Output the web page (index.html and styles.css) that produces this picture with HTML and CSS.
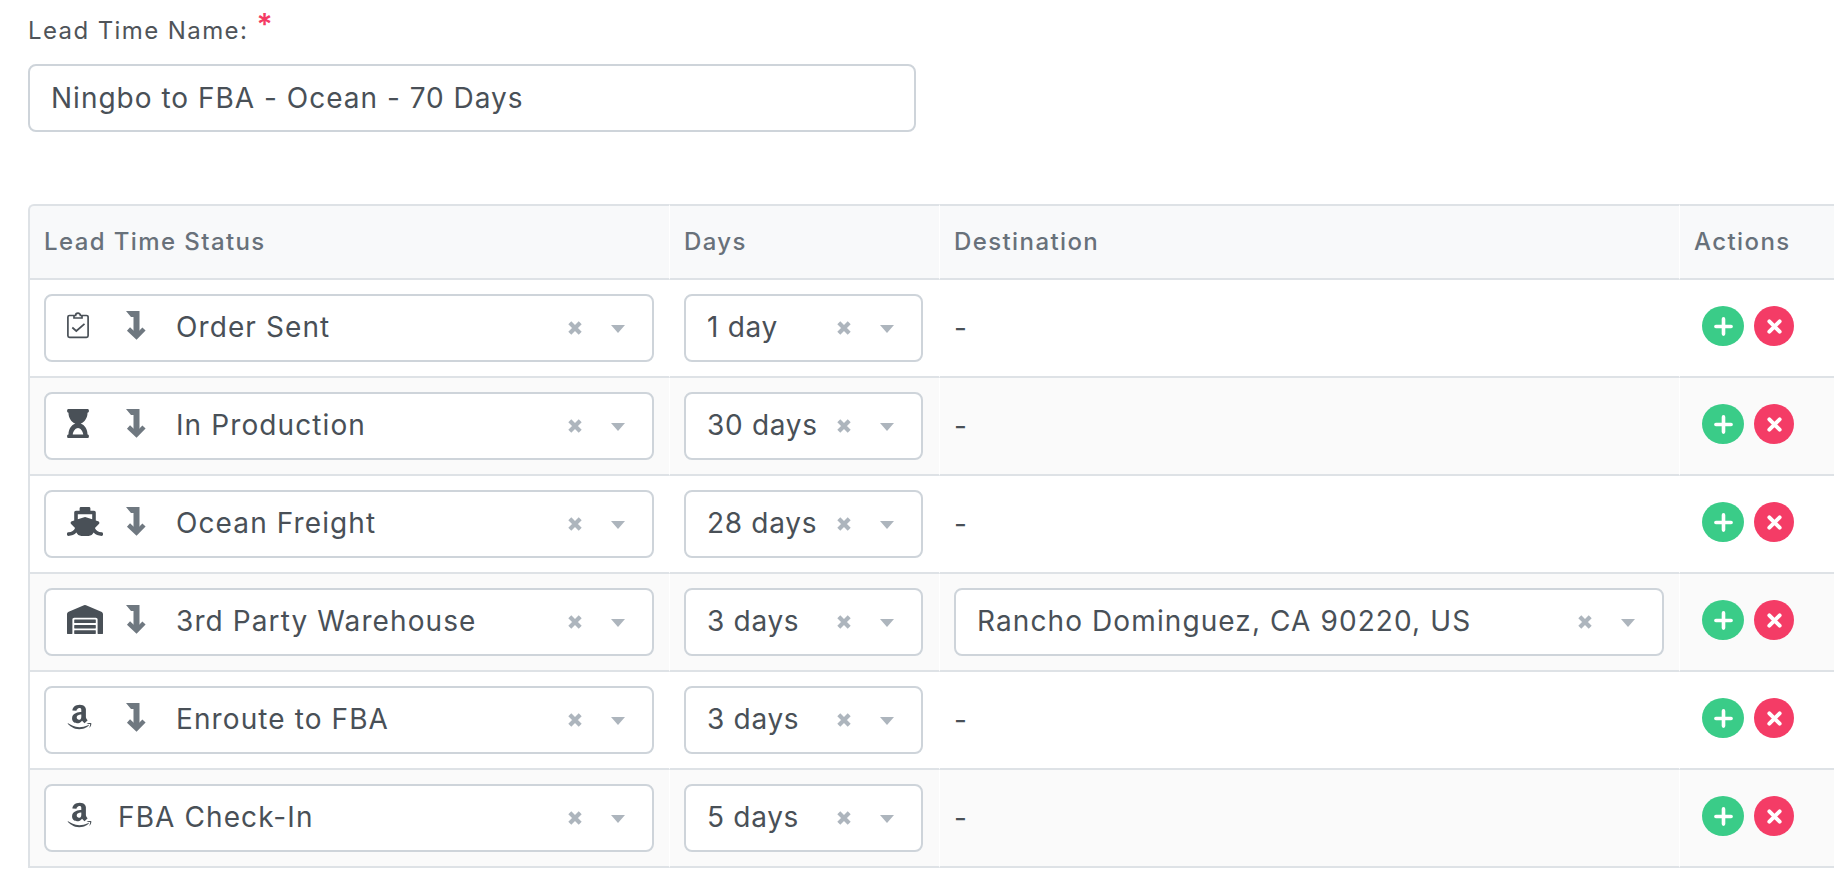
FILE: index.html
```html
<!DOCTYPE html>
<html lang="en">
<head>
<meta charset="utf-8">
<title>Lead Time</title>
<link rel="stylesheet" href="styles.css">
</head>
<body>
<svg class="defs" aria-hidden="true">
  <symbol id="i-arrow" viewBox="0 0 20 29"><path d="M0 0h13.500v24h-6V6H5z"/><path fill="none" stroke="currentColor" stroke-width="4.500" d="M2.500 18l8 7.500 7.500-7.500"/></symbol>
  <symbol id="i-clip" viewBox="0 0 22 28"><path fill="none" stroke="currentColor" stroke-width="1.7" d="M7 4.500H2.500a1.600 1.600 0 0 0-1.600 1.600v18.600a1.600 1.600 0 0 0 1.600 1.600h17a1.600 1.600 0 0 0 1.600-1.600V6.100a1.600 1.600 0 0 0-1.600-1.600H15M7 4.500V7h8V4.500h-1.600a2.400 2.400 0 0 0-4.800 0z"/><path fill="none" stroke="currentColor" stroke-width="1.700" d="M5.300 16.500l4 3.500 8.200-7.200"/></symbol>
  <symbol id="i-hour" viewBox="0 0 384 512"><path fill-rule="evenodd" d="M360 0H24C10.745 0 0 10.745 0 24v16c0 13.255 10.745 24 24 24 0 90.965 51.016 167.734 120.842 192C75.016 280.266 24 357.035 24 448c-13.255 0-24 10.745-24 24v16c0 13.255 10.745 24 24 24h336c13.255 0 24-10.745 24-24v-16c0-13.255-10.745-24-24-24 0-90.965-51.016-167.734-120.842-192C308.984 231.734 360 154.965 360 64c13.255 0 24-10.745 24-24V24c0-13.255-10.745-24-24-24zm-75.078 448H99.080c10-60 52.096-112 92.920-112 40.821 0 82.862 52 92.922 112z"/></symbol>
  <symbol id="i-ship" viewBox="0 0 640 512"><path d="M496.616 372.639l70.012-70.012c16.899-16.9 9.942-45.771-12.836-53.092L512 236.102V96c0-17.673-14.327-32-32-32h-64V24c0-13.255-10.745-24-24-24H248c-13.255 0-24 10.745-24 24v40h-64c-17.673 0-32 14.327-32 32v140.102l-41.792 13.433c-22.753 7.313-29.754 36.173-12.836 53.092l70.012 70.012C125.828 416.287 85.587 448 24 448c-13.255 0-24 10.745-24 24v16c0 13.255 10.745 24 24 24 61.023 0 107.499-20.61 143.258-59.396C181.677 487.432 216.021 512 256 512h128c39.979 0 74.323-24.568 88.742-59.396C508.495 491.384 554.968 512 616 512c13.255 0 24-10.745 24-24v-16c0-13.255-10.745-24-24-24-60.817 0-101.542-31.001-119.384-75.361zM192 128h256v87.500l-112.212-36.066a47.998 47.998 0 0 0-29.376 0L192 215.500V128z"/></symbol>
  <symbol id="i-ware" viewBox="0 0 640 512"><path d="M504 352H136.400c-4.400 0-8 3.600-8 8l-.1 48c0 4.400 3.600 8 8 8H504c4.400 0 8-3.600 8-8v-48c0-4.400-3.600-8-8-8zm0 96H136.100c-4.400 0-8 3.600-8 8l-.1 48c0 4.400 3.600 8 8 8h368c4.400 0 8-3.600 8-8v-48c0-4.400-3.600-8-8-8zm0-192H136.600c-4.400 0-8 3.600-8 8l-.1 48c0 4.400 3.600 8 8 8H504c4.400 0 8-3.600 8-8v-48c0-4.400-3.600-8-8-8zm106.500-139L338.400 3.700a48.150 48.150 0 0 0-36.900 0L29.500 117C11.700 124.500 0 141.900 0 161.300V504c0 4.400 3.600 8 8 8h80c4.400 0 8-3.600 8-8V256c0-17.600 14.600-32 32.600-32h382.800c18 0 32.600 14.400 32.600 32v248c0 4.400 3.600 8 8 8h80c4.400 0 8-3.600 8-8V161.300c0-19.400-11.700-36.800-29.500-44.300z"/></symbol>
  <symbol id="i-amzn" viewBox="0 0 448 512"><path d="M257.200 162.700c-48.700 1.800-169.500 15.500-169.500 117.500 0 109.500 138.300 114 183.500 43.200 6.500 10.200 35.400 37.500 45.300 46.800l56.800-56S341 288.900 341 261.400V114.300C341 89 316.500 32 228.700 32 140.700 32 94 87 94 136.300l73.500 6.800c16.300-49.500 54.200-49.500 54.200-49.500 40.700-.1 35.500 29.800 35.500 69.100zm0 86.800c0 80-84.200 68-84.200 17.200 0-47.200 50.500-56.700 84.200-57.800v40.600zm136 163.500c-7.700 10-70 67-174.500 67S34.200 408.500 9.700 379c-6.800-7.700 1-11.300 5.500-8.300C88.500 415.200 203 488.500 387.700 401c7.500-3.700 13.300 2 5.500 12zm39.800 2.200c-6.500 15.800-16 26.800-21.200 31-5.500 4.500-9.500 2.700-6.500-3.800s19.300-46.500 12.700-55c-6.500-8.300-37-4.300-48-3.200-10.800 1-13 2-14-.3-2.300-5.700 21.700-15.500 37.500-17.500 15.700-1.800 41-.8 46 5.700 3.700 5.100 0 27.100-6.500 43.100z"/></symbol>
  <symbol id="i-clear" viewBox="0 0 14 14"><path fill="none" stroke="currentColor" stroke-width="4.200" d="M1.800 1.800l10.400 10.400M12.200 1.800L1.800 12.200"/></symbol>
  <symbol id="i-caret" viewBox="0 0 14 8"><path d="M0 0h14L7 8z"/></symbol>
  <symbol id="i-plus" viewBox="0 0 20 20"><path fill="none" stroke="currentColor" stroke-width="3.800" stroke-linecap="round" d="M10 2v16M2 10h16"/></symbol>
  <symbol id="i-x" viewBox="0 0 16 16"><path fill="none" stroke="currentColor" stroke-width="4.200" stroke-linecap="round" d="M2.500 2.500l11 11M13.500 2.500l-11 11"/></symbol>
</svg>

<main class="page">
  <div class="field">
    <label class="field-label" for="name">Lead Time Name: <span class="req">*</span></label>
    <input class="text-input" id="name" type="text" value="Ningbo to FBA - Ocean - 70 Days">
  </div>

  <table class="grid">
    <colgroup><col class="c-status"><col class="c-days"><col class="c-dest"><col class="c-act"></colgroup>
    <thead>
      <tr><th>Lead Time Status</th><th>Days</th><th>Destination</th><th>Actions</th></tr>
    </thead>
    <tbody>
      <tr>
        <td><div class="sel"><div class="val"><svg class="ico ico-clip"><use href="#i-clip"/></svg><svg class="arrow"><use href="#i-arrow"/></svg><span>Order Sent</span></div><svg class="clr"><use href="#i-clear"/></svg><svg class="car"><use href="#i-caret"/></svg></div></td>
        <td><div class="sel"><div class="val"><span>1 day</span></div><svg class="clr"><use href="#i-clear"/></svg><svg class="car"><use href="#i-caret"/></svg></div></td>
        <td class="dash">-</td>
        <td><div class="acts"><button class="btn add" type="button"><svg><use href="#i-plus"/></svg></button><button class="btn del" type="button"><svg><use href="#i-x"/></svg></button></div></td>
      </tr>
      <tr>
        <td><div class="sel"><div class="val"><svg class="ico ico-hour"><use href="#i-hour"/></svg><svg class="arrow"><use href="#i-arrow"/></svg><span>In Production</span></div><svg class="clr"><use href="#i-clear"/></svg><svg class="car"><use href="#i-caret"/></svg></div></td>
        <td><div class="sel"><div class="val"><span>30 days</span></div><svg class="clr"><use href="#i-clear"/></svg><svg class="car"><use href="#i-caret"/></svg></div></td>
        <td class="dash">-</td>
        <td><div class="acts"><button class="btn add" type="button"><svg><use href="#i-plus"/></svg></button><button class="btn del" type="button"><svg><use href="#i-x"/></svg></button></div></td>
      </tr>
      <tr>
        <td><div class="sel"><div class="val"><svg class="ico ico-wide"><use href="#i-ship"/></svg><svg class="arrow"><use href="#i-arrow"/></svg><span>Ocean Freight</span></div><svg class="clr"><use href="#i-clear"/></svg><svg class="car"><use href="#i-caret"/></svg></div></td>
        <td><div class="sel"><div class="val"><span>28 days</span></div><svg class="clr"><use href="#i-clear"/></svg><svg class="car"><use href="#i-caret"/></svg></div></td>
        <td class="dash">-</td>
        <td><div class="acts"><button class="btn add" type="button"><svg><use href="#i-plus"/></svg></button><button class="btn del" type="button"><svg><use href="#i-x"/></svg></button></div></td>
      </tr>
      <tr>
        <td><div class="sel"><div class="val"><svg class="ico ico-wide"><use href="#i-ware"/></svg><svg class="arrow"><use href="#i-arrow"/></svg><span>3rd Party Warehouse</span></div><svg class="clr"><use href="#i-clear"/></svg><svg class="car"><use href="#i-caret"/></svg></div></td>
        <td><div class="sel"><div class="val"><span>3 days</span></div><svg class="clr"><use href="#i-clear"/></svg><svg class="car"><use href="#i-caret"/></svg></div></td>
        <td><div class="sel"><div class="val"><span>Rancho Dominguez, CA 90220, US</span></div><svg class="clr"><use href="#i-clear"/></svg><svg class="car"><use href="#i-caret"/></svg></div></td>
        <td><div class="acts"><button class="btn add" type="button"><svg><use href="#i-plus"/></svg></button><button class="btn del" type="button"><svg><use href="#i-x"/></svg></button></div></td>
      </tr>
      <tr>
        <td><div class="sel"><div class="val"><svg class="ico ico-amzn"><use href="#i-amzn"/></svg><svg class="arrow"><use href="#i-arrow"/></svg><span>Enroute to FBA</span></div><svg class="clr"><use href="#i-clear"/></svg><svg class="car"><use href="#i-caret"/></svg></div></td>
        <td><div class="sel"><div class="val"><span>3 days</span></div><svg class="clr"><use href="#i-clear"/></svg><svg class="car"><use href="#i-caret"/></svg></div></td>
        <td class="dash">-</td>
        <td><div class="acts"><button class="btn add" type="button"><svg><use href="#i-plus"/></svg></button><button class="btn del" type="button"><svg><use href="#i-x"/></svg></button></div></td>
      </tr>
      <tr>
        <td><div class="sel"><div class="val"><svg class="ico ico-amzn ico-last"><use href="#i-amzn"/></svg><span>FBA Check-In</span></div><svg class="clr"><use href="#i-clear"/></svg><svg class="car"><use href="#i-caret"/></svg></div></td>
        <td><div class="sel"><div class="val"><span>5 days</span></div><svg class="clr"><use href="#i-clear"/></svg><svg class="car"><use href="#i-caret"/></svg></div></td>
        <td class="dash">-</td>
        <td><div class="acts"><button class="btn add" type="button"><svg><use href="#i-plus"/></svg></button><button class="btn del" type="button"><svg><use href="#i-x"/></svg></button></div></td>
      </tr>
    </tbody>
  </table>
</main>
</body>
</html>
```

FILE: styles.css
```css
* { box-sizing: border-box; }
html, body { margin: 0; padding: 0; background: #fff; overflow: hidden; }
body { font-family: Inter, "Noto Sans", sans-serif; color: #495057; }
.defs { position: absolute; width: 0; height: 0; }
svg { fill: currentColor; display: block; }

.page { padding: 14px 0 0 28px; }

.field { width: 888px; }
.field-label { display: block; height: 50px; font-size: 24px; line-height: 24px; letter-spacing: 1.4px; color: #4f5459; }
.req { display: inline-block; color: #f43b64; font-size: 30px; font-weight: 600; line-height: 20px; margin-left: 0; letter-spacing: 0; vertical-align: 4px; }
.text-input {
  display: block; width: 100%; height: 68px; padding: 0 21px;
  border: 2px solid #ced4da; border-radius: 8px; background: #fff;
  font: 400 28px Inter, sans-serif; letter-spacing: 1px; color: #495057; outline: none;
}

.grid { display: table; margin-top: 72px; width: 1806px; table-layout: fixed; border-collapse: separate; border-spacing: 0; }
.c-status { width: 641px; }
.c-days { width: 270px; }
.c-dest { width: 740px; }
.c-act { width: 155px; }

.grid th, .grid td { padding: 14px 15px 14px 14px; border-bottom: 2px solid #dee2e6; border-left: 1px solid #fff; vertical-align: middle; text-align: left; }
.grid th { height: 76px; background: #f8f9fa; border-top: 2px solid #dee2e6; font-weight: 500; font-size: 24px; letter-spacing: 1.4px; color: #68717a; padding-top: 0; padding-bottom: 2px; }
.grid td { height: 98px; font-size: 28px; letter-spacing: 1.1px; }
.grid tr > :first-child { border-left: 2px solid #dee2e6; padding-left: 14px; }
.grid td:nth-child(2) { letter-spacing: .7px; }
.grid tr > :nth-child(2) { padding-right: 16px; }
.grid th:first-child { border-top-left-radius: 6px; }
.grid tbody tr:nth-child(even) td { background: #fafafa; }

.sel { display: flex; align-items: center; height: 68px; padding: 0 27px 0 21px; border: 2px solid #ced4da; border-radius: 8px; background: #fff; }
.val { flex: 1; min-width: 0; display: flex; align-items: center; white-space: nowrap; }
.val span { margin-top: -2px; }
.dash { padding-bottom: 16px; }
.ico { flex: none; color: #495057; margin-top: -6px; }
.ico-clip { width: 22px; height: 28px; }
.ico-hour { width: 22px; height: 29px; }
.ico-wide { width: 36px; height: 29px; }
.ico-amzn { width: 25px; height: 28px; }
.ico-last { margin-right: 26px; }
.arrow { width: 20px; height: 29px; flex: none; color: #6f7880; margin-top: -6px; margin-right: 30px; margin-left: 37px; }
.ico-wide + .arrow { margin-left: 23px; }
.ico-amzn + .arrow { margin-left: 34px; }
.clr { width: 14px; height: 14px; color: #adb5bd; flex: none; margin-right: 29px; }
.car { width: 14px; height: 8px; color: #adb5bd; flex: none; margin-top: 2px; }

.acts { display: flex; align-items: center; gap: 10px; margin: -4px 0 0 8px; }
.btn { display: flex; align-items: center; justify-content: center; padding: 0; height: 40px; border: 0; border-radius: 50%; color: #fff; }
.add { width: 42px; background: #3acc88; }
.del { width: 40px; background: #f43c66; }
.add svg { width: 19px; height: 19px; }
.del svg { width: 15px; height: 15px; }
```
